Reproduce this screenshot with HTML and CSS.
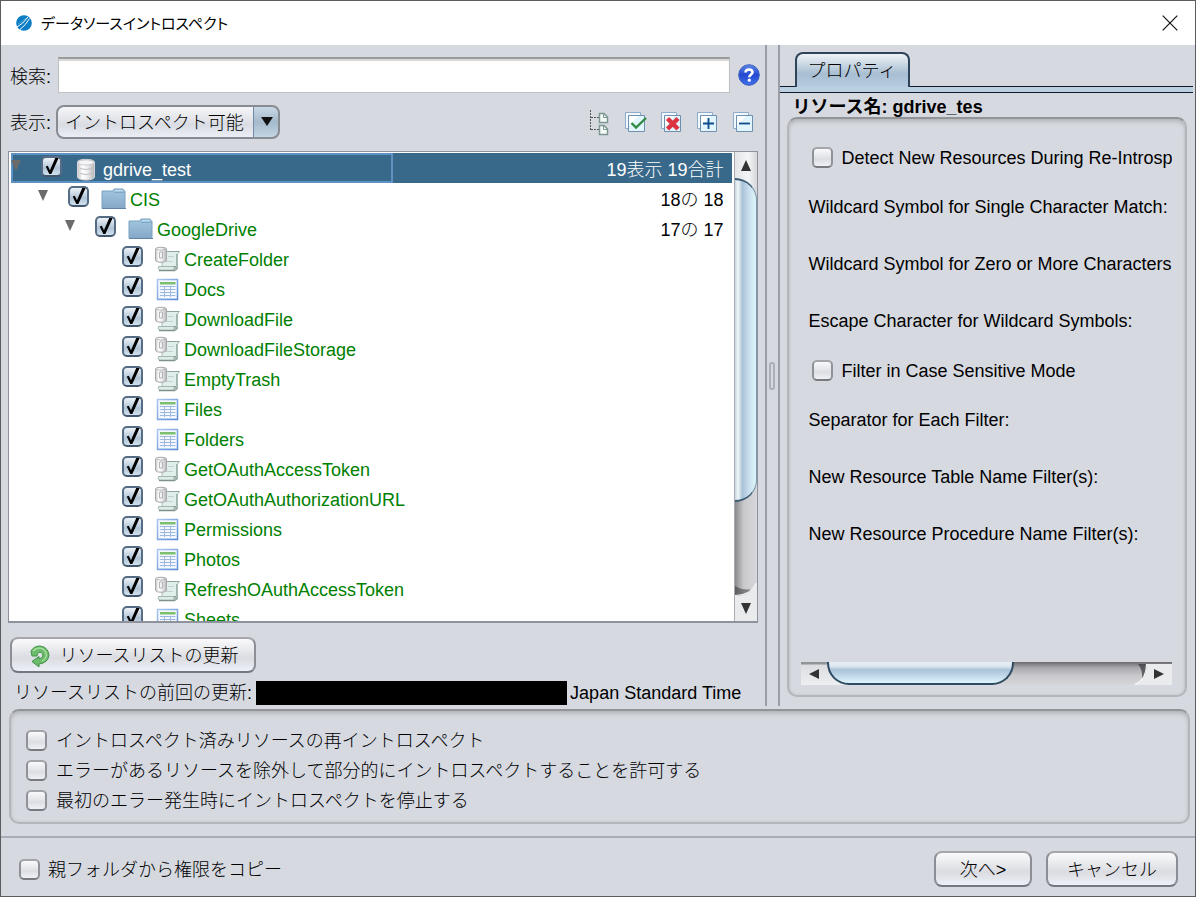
FILE: index.html
```html
<!DOCTYPE html>
<html lang="ja">
<head>
<meta charset="utf-8">
<title>データソースイントロスペクト</title>
<link rel="stylesheet" href="styles.css">
</head>
<body>
<svg class="defs" aria-hidden="true">
  <defs>
    <linearGradient id="gFolder" x1="0" y1="0" x2="0" y2="1"><stop offset="0" stop-color="#a3c8e0"/><stop offset="1" stop-color="#84a7c8"/></linearGradient>
    <linearGradient id="gDb" x1="0" y1="0" x2="1" y2="0"><stop offset="0" stop-color="#c4c4c6"/><stop offset=".3" stop-color="#ffffff"/><stop offset=".6" stop-color="#ececee"/><stop offset="1" stop-color="#b4b4b8"/></linearGradient>
    <linearGradient id="gTable" x1="0" y1="0" x2="1" y2="1"><stop offset="0" stop-color="#a9c8f2"/><stop offset="1" stop-color="#5b8ad4"/></linearGradient>
    <linearGradient id="gHelp" x1="0" y1="0" x2="0" y2="1"><stop offset="0" stop-color="#5d86e8"/><stop offset=".5" stop-color="#2348cf"/><stop offset="1" stop-color="#4272ea"/></linearGradient>
    <linearGradient id="gTrackEnd" x1="0" y1="0" x2="1" y2="0"><stop offset="0" stop-color="#8a8a8c"/><stop offset=".4" stop-color="#c9c9cc"/><stop offset="1" stop-color="#d8d8dc"/></linearGradient>
  </defs>
  <symbol id="tri" viewBox="0 0 10 11"><path d="M0 0H10L5 11Z" fill="#6b6b6b"/></symbol>
  <symbol id="folder" viewBox="0 0 26 26">
    <path d="M1 5H12L13 3H22L23 5H24V22.500H1Z" fill="url(#gFolder)" stroke="#7ba0bf"/>
    <path d="M13 6.500H24" stroke="#7fa8c6"/><path d="M14 4.500H22" stroke="#c0dcea"/><path d="M1 22.500H25" stroke="#5f84a6"/>
  </symbol>
  <symbol id="db" viewBox="0 0 26 26">
    <path d="M3.500 6C3.500 2.500 20.500 2.500 20.500 6V21C20.500 25 3.500 25 3.500 21Z" fill="url(#gDb)" stroke="#d4d4d8"/>
    <ellipse cx="12" cy="6.500" rx="8" ry="2.600" fill="#f4f4f6" stroke="#c2c2c6" stroke-width=".8"/>
    <path d="M6 12.500Q12 14.500 18 12.500M6 17.500Q12 19.500 18 17.500" fill="none" stroke="#bdbdc2"/>
  </symbol>
  <symbol id="proc" viewBox="0 0 26 26">
    <path d="M7 5.500H24.500L22.500 8V22H7Z" fill="#e0eeec" stroke="#a8bcb8"/>
    <path d="M8 5.500H24" stroke="#8ea39d"/><path d="M21.500 8V20" stroke="#9fb3af"/>
    <path d="M3.500 20.500H19V24.500H5Q2.500 23 3.500 20.500Z" fill="#dfece8" stroke="#a4b6b0"/><path d="M4 24.500H20" stroke="#7d928b" stroke-width="1.500"/>
    <path d="M19 20.500Q22 20 22.500 22Q22 24.500 19 24.500" fill="#a9bdb6" stroke="#879c95"/>
    <path d="M13 10.500H19M11 15.500H18" stroke="#c2d3cf"/>
    <path d="M.5 3C.5.700 11.500.700 11.500 3V14C11.500 17 .5 17 .5 14Z" fill="url(#gDb)" stroke="#a9a9ab"/>
    <path d="M2 3.500Q6 5 10 3.500" fill="none" stroke="#bbb"/><path d="M4.500 6V12H7.500V6Z" fill="none" stroke="#b5b5b8"/>
  </symbol>
  <symbol id="table" viewBox="0 0 26 26">
    <path d="M2.500 3.500H22.500V23.500H2.500Z" fill="#f4f8fe" stroke="url(#gTable)" stroke-width="1.500"/>
    <path d="M5 6H20.500V8.500H5Z" fill="#7cbf6e"/>
    <path d="M5 10.500H20.500M5 13.500H20.500M5 16.500H20.500M5 19.500H20.500M9.500 10V21M15.500 10V21" stroke="#9db9df"/>
    <path d="M3 22.500H22" stroke="#b4d0f4"/>
  </symbol>
  <symbol id="pages" viewBox="0 0 24 24">
    <path d="M1.500 1.500H16.500V17.500H1.500Z" fill="#f0f9ff" stroke="#8fabc8"/>
    <path d="M4.500 4.500H20.500V20.500H4.500Z" fill="#e2f4fd" stroke="#6f8fae"/><path d="M5 5H14L5 15Z" fill="#fff"/>
  </symbol>
</svg>

<div class="window">
  <header class="titlebar">
    <svg class="logo" width="16" height="16" viewBox="0 0 16 16"><circle cx="8" cy="8" r="7.800" fill="#0a7dc4"/><path d="M1 12Q7 9 12 2M4 14.500Q10 10 13.500 3.500" fill="none" stroke="#fff" stroke-width="1"/><path d="M2 9Q7 6 10 3" fill="none" stroke="#6cb8e2" stroke-width=".6"/></svg>
    <h1>データソースイントロスペクト</h1>
    <button class="close" type="button" aria-label="閉じる"><svg width="16" height="16" viewBox="0 0 16 16"><path d="M.7.700L15.300 15.300M15.300.700L.7 15.300" stroke="#111" stroke-width="1.200"/></svg></button>
  </header>

  <main class="split">
    <section class="left">
      <div class="search">
        <label for="q">検索:</label>
        <input id="q" type="text">
        <button class="plain" type="button" aria-label="ヘルプ"><svg width="22" height="22" viewBox="0 0 22 22"><circle cx="11" cy="11" r="10.300" fill="url(#gHelp)" stroke="#3d5fc4"/><path d="M7.500 8.500Q7.500 5.500 11 5.500Q14.500 5.500 14.500 8.300Q14.500 10 12.500 11Q11.300 11.700 11.300 13.300" fill="none" stroke="#fff" stroke-width="2.600"/><circle cx="11.300" cy="16.200" r="1.600" fill="#fff"/></svg></button>
      </div>
      <div class="view">
        <label for="show">表示:</label>
        <div class="combo">
          <select id="show"><option>イントロスペクト可能</option></select>
          <svg class="combo-arrow" width="12" height="9" viewBox="0 0 12 9"><path d="M0 0H12L6 9Z" fill="#111"/></svg>
        </div>
        <div class="tools">
          <button class="plain" type="button" aria-label="階層表示"><svg width="24" height="28" viewBox="0 0 24 28"><path d="M2.500 1V22M3 8.500H11M3 20.500H11" stroke="#555" stroke-dasharray="2 1" fill="none"/><path d="M11.500 4.500H16L19.500 8V13.500H11.500ZM11.500 16.500H16L19.500 20V25.500H11.500Z" fill="#f4fbf8" stroke="#7d9690" stroke-width="1.500"/><path d="M15.500 4.500V8.500H19.500M15.500 16.500V20.500H19.500" fill="none" stroke="#7d9690"/></svg></button>
          <button class="plain" type="button" aria-label="すべて選択"><svg width="24" height="24" viewBox="0 0 24 24"><use href="#pages"/><path d="M7.500 12L12 16.500L22 7" fill="none" stroke="#2f8b45" stroke-width="2.400"/></svg></button>
          <button class="plain" type="button" aria-label="すべて解除"><svg width="24" height="24" viewBox="0 0 24 24"><use href="#pages"/><path d="M7.500 7.500L18 18M18 7.500L7.500 18" stroke="#dc3342" stroke-width="4.500"/></svg></button>
          <button class="plain" type="button" aria-label="展開"><svg width="24" height="24" viewBox="0 0 24 24"><use href="#pages"/><path d="M7 12.500H18M12.500 7V18" stroke="#0b4c8c" stroke-width="1.800"/></svg></button>
          <button class="plain" type="button" aria-label="折りたたみ"><svg width="24" height="24" viewBox="0 0 24 24"><use href="#pages"/><path d="M7 12.500H18" stroke="#0b4c8c" stroke-width="1.800"/></svg></button>
        </div>
      </div>

      <div class="tree">
        <div class="rows">
          <table>
            <colgroup><col class="col-name"><col></colgroup>
            <tbody>
              <tr class="selected"><td><div class="node l0"><button class="toggle" type="button" aria-label="gdrive_testを閉じる"><svg><use href="#tri"/></svg></button><input id="n0" type="checkbox" checked><svg class="ico"><use href="#db"/></svg><label for="n0">gdrive_test</label></div></td><td>19表示 19合計</td></tr>
              <tr><td><div class="node l1"><button class="toggle" type="button" aria-label="CISを閉じる"><svg><use href="#tri"/></svg></button><input id="n1" type="checkbox" checked><svg class="ico"><use href="#folder"/></svg><label for="n1">CIS</label></div></td><td>18の 18</td></tr>
              <tr><td><div class="node l2"><button class="toggle" type="button" aria-label="GoogleDriveを閉じる"><svg><use href="#tri"/></svg></button><input id="n2" type="checkbox" checked><svg class="ico"><use href="#folder"/></svg><label for="n2">GoogleDrive</label></div></td><td>17の 17</td></tr>
              <tr><td><div class="node l3"><input id="n3" type="checkbox" checked><svg class="ico"><use href="#proc"/></svg><label for="n3">CreateFolder</label></div></td><td></td></tr>
              <tr><td><div class="node l3"><input id="n4" type="checkbox" checked><svg class="ico"><use href="#table"/></svg><label for="n4">Docs</label></div></td><td></td></tr>
              <tr><td><div class="node l3"><input id="n5" type="checkbox" checked><svg class="ico"><use href="#proc"/></svg><label for="n5">DownloadFile</label></div></td><td></td></tr>
              <tr><td><div class="node l3"><input id="n6" type="checkbox" checked><svg class="ico"><use href="#proc"/></svg><label for="n6">DownloadFileStorage</label></div></td><td></td></tr>
              <tr><td><div class="node l3"><input id="n7" type="checkbox" checked><svg class="ico"><use href="#proc"/></svg><label for="n7">EmptyTrash</label></div></td><td></td></tr>
              <tr><td><div class="node l3"><input id="n8" type="checkbox" checked><svg class="ico"><use href="#table"/></svg><label for="n8">Files</label></div></td><td></td></tr>
              <tr><td><div class="node l3"><input id="n9" type="checkbox" checked><svg class="ico"><use href="#table"/></svg><label for="n9">Folders</label></div></td><td></td></tr>
              <tr><td><div class="node l3"><input id="n10" type="checkbox" checked><svg class="ico"><use href="#proc"/></svg><label for="n10">GetOAuthAccessToken</label></div></td><td></td></tr>
              <tr><td><div class="node l3"><input id="n11" type="checkbox" checked><svg class="ico"><use href="#proc"/></svg><label for="n11">GetOAuthAuthorizationURL</label></div></td><td></td></tr>
              <tr><td><div class="node l3"><input id="n12" type="checkbox" checked><svg class="ico"><use href="#table"/></svg><label for="n12">Permissions</label></div></td><td></td></tr>
              <tr><td><div class="node l3"><input id="n13" type="checkbox" checked><svg class="ico"><use href="#table"/></svg><label for="n13">Photos</label></div></td><td></td></tr>
              <tr><td><div class="node l3"><input id="n14" type="checkbox" checked><svg class="ico"><use href="#proc"/></svg><label for="n14">RefreshOAuthAccessToken</label></div></td><td></td></tr>
              <tr><td><div class="node l3"><input id="n15" type="checkbox" checked><svg class="ico"><use href="#table"/></svg><label for="n15">Sheets</label></div></td><td></td></tr>
            </tbody>
          </table>
        </div>
        <div class="vbar">
          <button class="plain up" type="button" aria-label="上へ"><svg width="10" height="11" viewBox="0 0 10 11"><path d="M0 11H10L5 0Z" fill="#333"/></svg></button>
          <div class="vtrack"><div class="vthumb"></div></div>
          <button class="plain down" type="button" aria-label="下へ"><svg width="22" height="38" viewBox="0 0 22 38"><path d="M0 0H22V14H0Z" fill="url(#gTrackEnd)"/><path d="M0 3Q8 8 18 6Q12 13 0 13Z" fill="#303033" opacity=".5"/><path d="M0 13Q15 13 22 0V38H0Z" fill="#eaebec"/><path d="M0 12.500Q15 12.500 21.500 0" fill="none" stroke="#fff"/><path d="M6 20H16L11 31Z" fill="#333"/></svg></button>
        </div>
      </div>

      <button class="btn refresh" type="button"><svg width="20" height="22" viewBox="0 0 20 22"><path d="M1 6Q4 1 10 1Q18 2 19 10Q18 18 9 19V22L2 16.500L9 11.500V14Q13 13.500 13 10Q12 6.500 8.500 7.500Q7 8.500 7 11H2Z" fill="#6dbb6c" stroke="#3f9345"/><path d="M3 6Q6 3 10 3Q16 4 16.500 10Q16 14 12 16" fill="none" stroke="#a5dc9c" stroke-width="1.500"/></svg><span>リソースリストの更新</span></button>
      <p class="status"><span>リソースリストの前回の更新:</span><span class="redacted"></span><span>Japan Standard Time</span></p>
    </section>

    <div class="divider"><span class="grip"></span></div>

    <section class="right">
      <div class="tabs"><button class="tab" type="button">プロパティ</button></div>
      <h2>リソース名: gdrive_tes</h2>
      <div class="group props">
        <div class="fields">
          <div class="check"><input id="p1" type="checkbox"><label for="p1">Detect New Resources During Re-Introsp</label></div>
          <p>Wildcard Symbol for Single Character Match:</p>
          <p>Wildcard Symbol for Zero or More Characters</p>
          <p>Escape Character for Wildcard Symbols:</p>
          <div class="check"><input id="p2" type="checkbox"><label for="p2">Filter in Case Sensitive Mode</label></div>
          <p>Separator for Each Filter:</p>
          <p>New Resource Table Name Filter(s):</p>
          <p>New Resource Procedure Name Filter(s):</p>
        </div>
        <div class="hbar">
          <button class="plain prev" type="button" aria-label="左へ"><svg width="10" height="10" viewBox="0 0 10 10"><path d="M10 0V10L0 5Z" fill="#333"/></svg></button>
          <div class="htrack"><div class="hthumb"></div></div>
          <button class="plain next" type="button" aria-label="右へ"><svg width="38" height="23" viewBox="0 0 38 23"><path d="M4 2H12Q13 12 8 17Q9 8 4 2Z" fill="#303033" opacity=".65"/><path d="M13 2H38V23H0Q13 17 13 2Z" fill="#eaebec"/><path d="M1 22.500Q12.500 17 12.500 2" fill="none" stroke="#fff"/><path d="M20 7V17L30 12Z" fill="#333"/></svg></button>
        </div>
      </div>
    </section>
  </main>

  <section class="group options">
    <div class="check"><input id="o1" type="checkbox"><label for="o1">イントロスペクト済みリソースの再イントロスペクト</label></div>
    <div class="check"><input id="o2" type="checkbox"><label for="o2">エラーがあるリソースを除外して部分的にイントロスペクトすることを許可する</label></div>
    <div class="check"><input id="o3" type="checkbox"><label for="o3">最初のエラー発生時にイントロスペクトを停止する</label></div>
  </section>

  <footer>
    <div class="check"><input id="f1" type="checkbox"><label for="f1">親フォルダから権限をコピー</label></div>
    <button class="btn next-step" type="button">次へ&gt;</button>
    <button class="btn cancel" type="button">キャンセル</button>
  </footer>
</div>
</body>
</html>
```
FILE: styles.css
```css
* { box-sizing: border-box; }
body, h1, h2, p { margin: 0; }
body, button, input, select {
  font: 300 18px/24px "Liberation Sans", "Noto Sans CJK JP", sans-serif;
  color: #000;
}
svg { display: block; flex: none; }
.defs { position: absolute; width: 0; height: 0; }

.window {
  height: 100vh;
  min-height: 720px;
  display: flex;
  flex-direction: column;
  border: 1px solid #5c5c5e;
  background: #d6d9e0;
  overflow: hidden;
}
.titlebar {
  flex: none;
  height: 44px;
  padding: 0 17px 0 15px;
  display: flex;
  align-items: center;
  gap: 9px;
  background: #fff;
}
h1 {
  flex: 1;
  font: 400 15px/24px "Noto Sans CJK JP", sans-serif;
  font-feature-settings: "palt";
}
.close, .plain {
  padding: 0;
  border: 0;
  background: none;
  display: flex;
  align-items: center;
  justify-content: center;
}

.split {
  flex: 1;
  min-height: 0;
  display: grid;
  grid-template-columns: minmax(0, 1fr) 15px 34.8%;
  margin-bottom: 3px;
}
.left {
  min-height: 0;
  padding: 12px 7px 1px 7px;
  display: flex;
  flex-direction: column;
}
.search, .view { display: flex; align-items: center; flex: none; padding-left: 2px; }
.search label, .view label { flex: none; width: 46px; }
.search label { padding-top: 3px; }
.view label { padding-top: 2px; }
.search { margin-bottom: 12px; gap: 2px; }
.search input {
  flex: 1;
  min-width: 0;
  height: 36px;
  margin: 0 6px 0 0;
  border: 1px solid #c0c1c4;
  border-top: 2px solid #9a9b9b;
  background: #fff;
  box-shadow: inset 0 2px 1px #d8d8d8;
  padding: 0 8px;
}
.search .plain { width: 22px; margin-right: -2px; }
.view { margin-bottom: 12px; }
.combo { display: grid; align-items: center; }
.combo select {
  grid-area: 1 / 1;
  width: 224px;
  height: 34px;
  padding: 2px 32px 0 7px;
  appearance: none;
  border: 2px solid #878b92;
  border-radius: 8px;
  background:
    linear-gradient(#6f8ba6, #6f8ba6) right 24px top / 1px 100% no-repeat,
    linear-gradient(#c9d8e5, #a4b9cc 50%, #c3d6e6) right / 24px 100% no-repeat,
    linear-gradient(#f6f6f9, #d9dce2 60%, #eceef5);
}
.combo-arrow { grid-area: 1 / 1; justify-self: end; margin: 0 7px 2px 0; pointer-events: none; }
.tools { margin-left: auto; padding: 1px 2px 0 0; display: flex; align-items: center; gap: 12px; }

.tree {
  flex: 1;
  min-height: 0;
  display: flex;
  border: 1px solid #8e929d;
  border-bottom-width: 2px;
  background: #fff;
}
.rows { flex: 1; min-width: 0; overflow: hidden; padding: 1px 2px 0 2px; }
table { width: 100%; table-layout: fixed; border-collapse: collapse; }
.col-name { width: 53%; }
td { height: 30px; padding: 0; vertical-align: top; text-align: right; }
td:last-child { padding: 5px 8px 0 0; line-height: 25px; }
.node { height: 30px; display: flex; align-items: flex-start; color: #008000; }
.node label { padding-top: 5px; height: 30px; line-height: 25px; }
.toggle { width: 30px; padding: 7px 0 0; border: 0; background: none; flex: none; }
.toggle svg { width: 10px; height: 11px; }
.ico { width: 26px; height: 26px; margin: 3px 3px 0 0; }
.l1 { padding-left: 27px; }
.l2 { padding-left: 54px; }
.l3 { padding-left: 111px; }
.selected { background: #39698a; color: #fff; }
.selected .node { color: #fff; }
.selected td:first-child { box-shadow: inset 0 0 0 2px #5f92c4; }

input[type="checkbox"] {
  flex: none;
  appearance: none;
  width: 21px;
  height: 21px;
  margin: 0;
  border: 2px solid #8f9298;
  border-top-color: #a3a5aa;
  border-bottom-color: #777a80;
  border-radius: 5px;
  background: linear-gradient(#fafafc, #dcdee3 60%, #f0f1f6);
}
.node input[type="checkbox"] { margin: 3px 12px 0 0; }
input[type="checkbox"]:checked {
  border-color: #566c84;
  border-bottom-color: #43586e;
  background: linear-gradient(#eef3f8, #b0c4d6 60%, #d3e3ef);
}
input[type="checkbox"]:checked::before {
  content: "";
  display: block;
  height: 17px;
  background: #000;
  clip-path: polygon(16% 50%, 28% 46%, 41% 72%, 72% 0, 92% 0, 49% 94%, 37% 94%);
}

.vbar {
  flex: none;
  width: 23px;
  display: flex;
  flex-direction: column;
  border-left: 1px solid #a8aab0;
  background: linear-gradient(90deg, #e4e5e8, #f4f5f6 60%, #d6d7da);
}
.up { height: 26px; flex: none; }
.vtrack {
  flex: 1;
  min-height: 0;
  background: linear-gradient(90deg, #8a8a8c, #c9c9cc 40%, #d8d8dc) bottom / 100% 50% no-repeat;
}
.vthumb {
  height: 80%;
  border: 2px solid #3a5970;
  border-left: 0;
  border-right: 1px solid #7f97aa;
  border-radius: 0 22px 22px 0 / 0 22px 22px 0;
  background: linear-gradient(90deg, #c6d6e2, #f0f6f8 15%, #a9c2d6 35%, #c8deee 65%, #def6fa);
}
.down { flex: none; }

.btn {
  display: flex;
  align-items: center;
  justify-content: center;
  height: 36px;
  padding: 2px 0 0;
  border: 2px solid #8b8e94;
  border-top-color: #a5a7ab;
  border-bottom-color: #74777d;
  border-radius: 8px;
  background: linear-gradient(#fafafb, #dadce1 60%, #eef0f8);
}
.refresh { flex: none; align-self: flex-start; gap: 9px; width: 246px; margin: 14px 0 8px 2px; padding-left: 3px; }
.status { flex: none; display: flex; align-items: center; height: 24px; padding-left: 6px; white-space: nowrap; }
.redacted { width: 311px; height: 24px; margin: 0 3px 0 4px; background: #000; }

.divider {
  display: flex;
  align-items: center;
  justify-content: center;
  border: solid #9a9ca8;
  border-width: 0 2px;
}
.grip { width: 6px; height: 28px; border: 2px solid #acaeb6; border-radius: 3px; background: #d6d9e0; }

.right { min-width: 0; min-height: 0; display: flex; flex-direction: column; padding: 7px 2px 9px 0; }
.tabs {
  flex: none;
  padding-left: 15px;
  border-bottom: 1px solid #11182b;
  background: linear-gradient(#11182b, #11182b) 0 34px / 100% 1px no-repeat, linear-gradient(#bcd0e4, #bcd0e4) 0 35px / 100% 5px no-repeat;
  height: 41px;
}
.tab {
  width: 115px;
  height: 35px;
  border: 2px solid #2e4459;
  border-bottom: 0;
  border-radius: 8px 8px 0 0;
  background: linear-gradient(#eef3f7, #a8bed2 60%, #b6cbdf);
  padding: 1px 0 0;
}
h2 { flex: none; margin: 2px 0 -2px 13px; font-size: 18px; line-height: 24px; font-weight: 700; white-space: nowrap; }

.group {
  border: 2px solid #b4b6bb;
  border-top-color: #929497;
  border-radius: 10px;
  box-shadow: inset 0 4px 5px -2px #aeb0b4, inset 0 0 3px #bfc1c6;
}
.check { display: flex; align-items: center; gap: 9px; height: 30px; white-space: nowrap; }
.check label { padding-top: 1px; }
.props {
  flex: 1;
  min-height: 0;
  margin: 0 6px 0 7px;
  padding: 17px 13px 10px 12px;
  display: flex;
  flex-direction: column;
}
.fields { flex: 1; min-height: 0; overflow: hidden; }
.fields .check { height: 42px; padding-left: 11px; }
.fields .check label { padding-top: 2px; }
.fields p { height: 57px; padding-left: 8px; line-height: 58px; white-space: nowrap; }
.hbar {
  flex: none;
  height: 23px;
  display: flex;
  background: linear-gradient(#929396 2px, #dcdde0 3px, #eeeff1);
}
.prev { width: 26px; flex: none; }
.htrack { flex: 1; background: linear-gradient(#6b6b6e, #a9a9ad 25%, #c9c9cd 60%, #d6d6da) right / 60% 100% no-repeat; }
.hthumb {
  width: 61%;
  height: 23px;
  border: 2px solid #2e4a60;
  border-top: 0;
  border-radius: 0 0 22px 22px;
  background: linear-gradient(#e8eef3, #dce8f1 20%, #a9c2d6 38%, #c4dcec 70%, #def4fb);
}
.next { flex: none; background: linear-gradient(#6b6b6e, #a9a9ad 25%, #c9c9cd 60%, #d6d6da); }

.options { flex: none; margin: 0 5px 0 8px; padding: 14px 15px 7px; }
footer {
  flex: none;
  height: 60px;
  margin-top: 12px;
  padding: 4px 17px 0 18px;
  display: flex;
  align-items: center;
  gap: 14px;
  border-top: 2px solid #a9abb6;
}
footer .check { margin-right: auto; gap: 8px; }
.next-step { width: 98px; }
.cancel { width: 132px; }
```
